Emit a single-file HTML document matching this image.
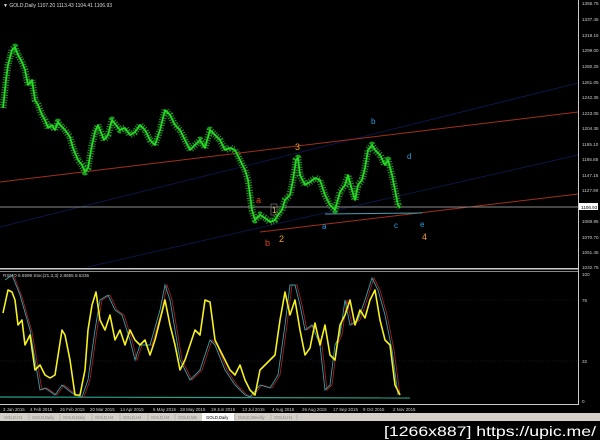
<!DOCTYPE html>
<html><head><meta charset="utf-8"><style>
html,body{margin:0;padding:0;background:#000;width:600px;height:440px;overflow:hidden}
svg{display:block}
text{font-family:"Liberation Sans",sans-serif}
</style></head><body>
<svg width="600" height="440" viewBox="0 0 600 440">
<defs><clipPath id="main"><rect x="0" y="0" width="578" height="267"/></clipPath></defs>
<rect width="600" height="440" fill="#000"/>
<g clip-path="url(#main)">
<line x1="0" y1="227" x2="578" y2="83" stroke="#0a1645" stroke-width="1"/>
<line x1="0" y1="287" x2="578" y2="155" stroke="#0a1645" stroke-width="1"/>
<line x1="0" y1="182" x2="578" y2="112" stroke="#a0301c" stroke-width="1"/>
<line x1="260" y1="232" x2="578" y2="194" stroke="#a0301c" stroke-width="1"/>
</g>
<line x1="0" y1="207" x2="578" y2="207" stroke="#8a8a8a" stroke-width="1"/>
<line x1="325" y1="214" x2="422" y2="213" stroke="#4aa0b0" stroke-width="1"/>
<!-- price -->
<g fill="none" stroke-linejoin="round">
<polyline stroke="#1a9a1a" stroke-width="7" stroke-dasharray="1 1.5" points="3,108 6,80 8,65 12,50 15,47 18,55 22,62 25,70 28,85 32,80 35,100 38,105 42,115 45,120 48,128 52,125 55,130 58,122 62,127 65,130 70,137 73,148 78,160 82,165 85,172 88,168 92,145 95,132 98,125 100,130 104,140 108,135 112,120 116,125 120,130 125,128 130,135 135,132 140,125 145,130 150,140 155,145 160,130 165,110 170,115 175,125 180,130 185,140 190,150 195,145 200,140 205,148 210,130 215,135 220,140 225,150 230,148 235,150 240,160 245,170 248,180 252,210 255,220 260,215 265,218 270,222 275,220 278,215 282,210 285,200 290,195 293,180 296,160 298,158 300,175 305,185 310,182 315,178 320,180 325,195 330,205 335,210 340,192 345,185 348,175 352,190 355,200 358,185 362,180 365,168 368,150 372,145 375,150 380,155 385,165 388,160 392,175 395,190 398,205 400,208"/>
<polyline stroke="#28d828" stroke-width="1.8" points="3,108 6,80 8,65 12,50 15,47 18,55 22,62 25,70 28,85 32,80 35,100 38,105 42,115 45,120 48,128 52,125 55,130 58,122 62,127 65,130 70,137 73,148 78,160 82,165 85,172 88,168 92,145 95,132 98,125 100,130 104,140 108,135 112,120 116,125 120,130 125,128 130,135 135,132 140,125 145,130 150,140 155,145 160,130 165,110 170,115 175,125 180,130 185,140 190,150 195,145 200,140 205,148 210,130 215,135 220,140 225,150 230,148 235,150 240,160 245,170 248,180 252,210 255,220 260,215 265,218 270,222 275,220 278,215 282,210 285,200 290,195 293,180 296,160 298,158 300,175 305,185 310,182 315,178 320,180 325,195 330,205 335,210 340,192 345,185 348,175 352,190 355,200 358,185 362,180 365,168 368,150 372,145 375,150 380,155 385,165 388,160 392,175 395,190 398,205 400,208"/>
</g>
<!-- wave labels -->
<g font-size="9">
<text x="256" y="203" fill="#e8401c">a</text>
<text x="265" y="246" fill="#e8401c">b</text>
<rect x="271" y="204" width="6" height="11" fill="none" stroke="#888" stroke-width="0.6"/>
<text x="272" y="213" fill="#e8c040" font-size="8">1</text>
<text x="279" y="242" fill="#f0a020">2</text>
<text x="295" y="150" fill="#f0a020">3</text>
<text x="422" y="240" fill="#f0a020">4</text>
<g fill="#22a0e0" font-size="8">
<text x="322" y="229">a</text><text x="371" y="124">b</text><text x="394" y="228">c</text><text x="407" y="159">d</text><text x="420" y="227">e</text>
</g></g>
<text x="3" y="7" fill="#ddd" font-size="5">▼ GOLD,Daily  1107.20 1113.43 1104.41 1106.93</text>
<line x1="578.5" y1="0" x2="578.5" y2="404" stroke="#ccc" stroke-width="1"/>
<g fill="#ccc" font-size="4.6">
<text x="582" y="5">1356.75</text><text x="582" y="21">1337.45</text><text x="582" y="37">1318.15</text><text x="582" y="52">1299.00</text><text x="582" y="68">1280.25</text><text x="582" y="84">1261.05</text><text x="582" y="99">1242.35</text><text x="582" y="115">1223.05</text><text x="582" y="130">1204.35</text><text x="582" y="146">1185.10</text><text x="582" y="161">1165.85</text><text x="582" y="177">1147.15</text><text x="582" y="192">1127.90</text><text x="582" y="223">1089.95</text><text x="582" y="239">1070.70</text><text x="582" y="254">1051.45</text><text x="582" y="269">1032.75</text>
</g>
<rect x="579" y="203" width="19" height="7" fill="#fff"/>
<text x="581" y="209" fill="#000" font-size="4.6">1106.93</text>
<rect x="0" y="268" width="578" height="1.5" fill="#ccc"/>
<rect x="0" y="271" width="578" height="1" fill="#888"/>
<g stroke="#333" stroke-dasharray="1 2" stroke-width="0.6">
<line x1="0" y1="300" x2="578" y2="300"/><line x1="0" y1="361" x2="578" y2="361"/>
</g>
<text x="3" y="277" fill="#ccc" font-size="4.6">RSMO 6.6598  Stoc(21,3,3) 2.8655 8.5336</text>
<g fill="#ccc" font-size="4.6"><text x="582" y="276">100</text><text x="582" y="302">76</text><text x="582" y="363">32</text><text x="582" y="403">0</text></g>
<line x1="0" y1="397" x2="410" y2="398" stroke="#2aa08a" stroke-width="1.2"/>
<polyline fill="none" stroke="#a02020" stroke-width="0.9" points="7,278 14,276 22,297 32,332 42,390 47,388 57,395 64,385 70,390 77,395 84,397 90,380 97,330 102,300 110,295 117,310 124,315 132,340 137,360 142,345 147,345 152,345 162,310 167,285 172,300 177,330 182,360 192,380 202,370 212,340 217,345 227,370 237,385 247,395 252,397 262,385 272,388 280,375 287,325 292,285 297,285 302,305 307,330 314,325 322,345 327,390 332,385 337,345 342,335 347,300 352,325 360,320 367,300 374,278 380,290 387,315 394,350 400,395"/>
<polyline fill="none" stroke="#3aa0a8" stroke-width="0.9" points="5,280 12,275 20,295 30,330 40,390 45,388 55,395 62,385 68,390 75,395 82,397 88,380 95,330 100,300 108,295 115,310 122,315 130,340 135,360 140,345 145,345 150,345 160,310 165,285 170,300 175,330 180,360 190,380 200,370 210,340 215,345 225,370 235,385 245,395 250,397 260,385 270,388 278,375 285,325 290,285 295,285 300,305 305,330 312,325 320,345 325,390 330,385 335,345 340,335 345,300 350,325 358,320 365,300 372,278 378,290 385,315 392,350 398,395"/>
<polyline fill="none" stroke="#f5f020" stroke-width="1.6" stroke-linejoin="round" points="3,313 8,290 12,292 15,300 18,325 22,320 25,345 30,335 35,370 40,365 45,375 50,378 55,375 62,330 65,335 70,360 75,395 80,395 85,370 88,330 92,305 96,292 100,320 105,330 110,315 115,340 120,330 125,345 130,330 135,340 140,345 145,340 150,355 155,340 160,320 165,300 170,325 175,345 180,370 185,360 190,345 195,330 200,335 205,300 210,302 215,340 220,350 225,360 230,370 235,375 240,365 245,380 250,390 255,395 260,370 265,365 270,360 275,355 280,320 285,292 290,315 295,300 300,330 305,355 310,348 315,323 320,345 325,325 330,355 335,360 340,325 345,315 350,300 355,325 360,310 365,318 370,300 375,290 380,320 385,340 390,345 395,385 400,395"/>
<line x1="0" y1="404.5" x2="579" y2="404.5" stroke="#ccc" stroke-width="1"/>
<g fill="#ccc" font-size="4.4">
<text x="3" y="411">3 Jan 2015</text><text x="30" y="411">4 Feb 2015</text><text x="60" y="411">26 Feb 2015</text><text x="90" y="411">20 Mar 2015</text><text x="120" y="411">14 Apr 2015</text><text x="153" y="411">6 May 2015</text><text x="180" y="411">28 May 2015</text><text x="211" y="411">19 Jun 2015</text><text x="242" y="411">13 Jul 2015</text><text x="272" y="411">4 Aug 2015</text><text x="302" y="411">26 Aug 2015</text><text x="333" y="411">17 Sep 2015</text><text x="363" y="411">9 Oct 2015</text><text x="393" y="411">2 Nov 2015</text>
</g>
<rect x="0" y="413" width="600" height="8" fill="#d4d0c8"/>
<rect x="202" y="413" width="32" height="8" fill="#fff"/>
<g fill="#888" font-size="4.2">
<text x="4" y="419">GOLD,H1</text><text x="32" y="419">GOLD,Daily</text><text x="63" y="419">GOLD,Daily</text><text x="95" y="419">GOLD,H4</text><text x="123" y="419">GOLD,H4</text><text x="151" y="419">GOLD,H4</text><text x="178" y="419">GOLD,M5</text><text x="206" y="419" fill="#000">GOLD,Daily</text><text x="238" y="419">GOLD,Weekly</text><text x="274" y="419">GOLD,H1</text>
</g>
<g stroke="#999" stroke-width="0.5"><line x1="29" y1="414" x2="29" y2="420"/><line x1="60" y1="414" x2="60" y2="420"/><line x1="92" y1="414" x2="92" y2="420"/><line x1="120" y1="414" x2="120" y2="420"/><line x1="148" y1="414" x2="148" y2="420"/><line x1="175" y1="414" x2="175" y2="420"/><line x1="235" y1="414" x2="235" y2="420"/><line x1="271" y1="414" x2="271" y2="420"/><line x1="297" y1="414" x2="297" y2="420"/></g>
<text x="384" y="436" fill="#fff" font-size="14" textLength="212" lengthAdjust="spacingAndGlyphs">[1266x887] https://upic.me/</text>
</svg>
</body></html>
